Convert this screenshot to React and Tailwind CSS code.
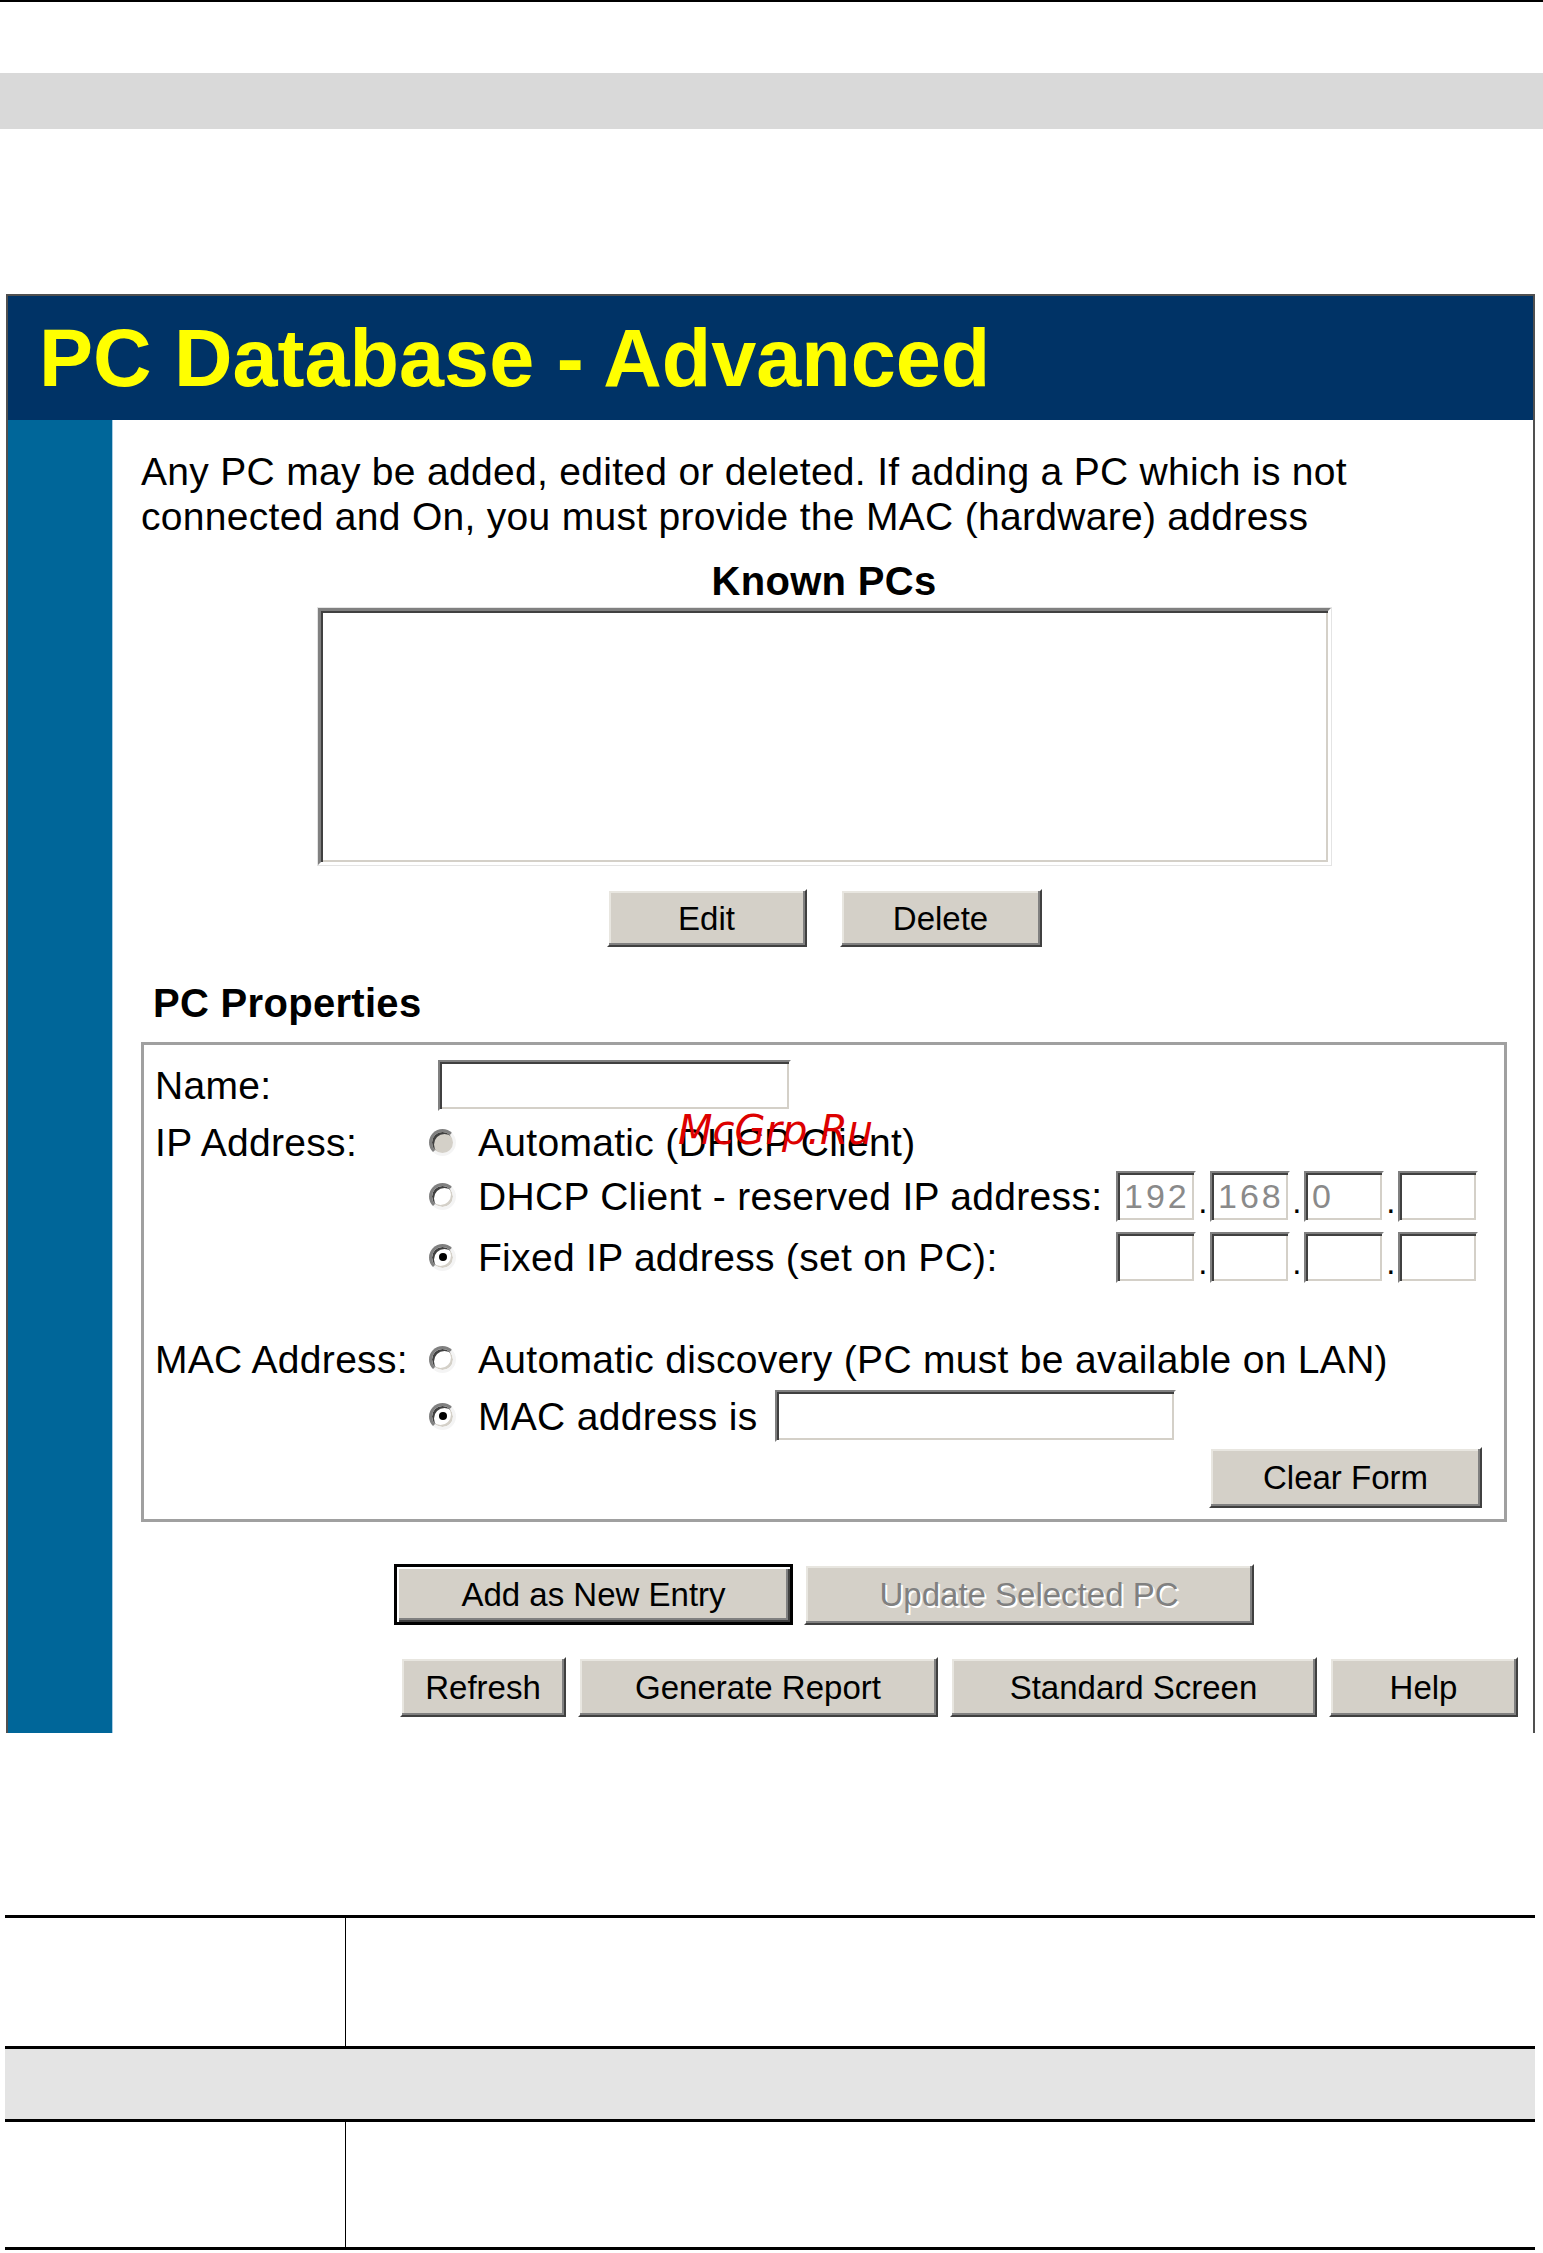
import React from 'react'

// Classic Windows 3D bevels
const RAISED =
  'bg-[#d4d0c8] border-2 border-t-white border-l-white border-b-[#404040] border-r-[#404040] shadow-[inset_-2px_-2px_0_#808080,inset_2px_2px_0_#e8e6e0]'
const SUNKEN =
  'bg-white border-2 border-t-[#808080] border-l-[#808080] border-b-white border-r-white shadow-[inset_2px_2px_0_#404040,inset_-2px_-2px_0_#d4d0c8]'

function Button({ children, className = '', disabled = false }) {
  return (
    <div
      className={`${RAISED} flex items-center justify-center text-[33px] leading-none tracking-normal ${
        disabled ? 'text-[#808080] [text-shadow:2px_2px_0_#ffffff]' : 'text-black'
      } ${className}`}
    >
      {children}
    </div>
  )
}

function Radio({ checked = false, disabled = false }) {
  return (
    <span
      className={`w-[27px] h-[27px] shrink-0 rounded-full border-[3px] border-t-[#808080] border-l-[#808080] border-b-[#f4f4f4] border-r-[#f4f4f4] shadow-[inset_2px_2px_0_#404040,inset_-2px_-2px_0_#d4d0c8] flex items-center justify-center ${
        disabled ? 'bg-[#d4d0c8]' : 'bg-white'
      }`}
    >
      {checked && <span className="w-[8px] h-[8px] rounded-full bg-black" />}
    </span>
  )
}

function IpBox({ value }) {
  return (
    <div className={`${SUNKEN} w-[80px] h-[51px] flex items-center pl-[6px] text-[34px] tracking-[3px] text-[#8a8a8a] leading-none`}>
      {value}
    </div>
  )
}

function Dot() {
  return <div className="w-[14px] h-[51px] flex items-end justify-center text-[33px] leading-[40px]">.</div>
}

function IpFields({ values }) {
  return (
    <div className="flex">
      <IpBox value={values[0]} />
      <Dot />
      <IpBox value={values[1]} />
      <Dot />
      <IpBox value={values[2]} />
      <Dot />
      <IpBox value={values[3]} />
    </div>
  )
}

export default function App() {
  return (
    <div className="relative w-[1543px] h-[2253px] bg-white overflow-hidden font-['Liberation_Sans',Arial,sans-serif] text-black">
      {/* page header rule + grey band */}
      <div className="h-[2px] bg-black" />
      <div className="mt-[71px] h-[56px] bg-[#d9d9d9]" />

      {/* screenshot panel */}
      <div className="mt-[165px] ml-[6px] w-[1529px] border-2 border-b-0 border-[#505050]">
        <div className="h-[124px] bg-[#003366] flex items-center pl-[31px]">
          <h1 className="text-[81px] leading-[80px] font-bold text-[#ffff00]">PC Database - Advanced</h1>
        </div>

        <div className="flex">
          <div className="w-[105px] shrink-0 bg-[#006699] border-r border-[#a9cde4]" />

          <div className="flex-1 pt-[29px] pl-[28px] pr-[26px] pb-[16px]">
            <p className="text-[39px] leading-[45px] tracking-[0.3px]">
              Any PC may be added, edited or deleted. If adding a PC which is not
              <br />
              connected and On, you must provide the MAC (hardware) address
            </p>

            <h2 className="mt-[19px] text-center text-[40px] leading-[46px] font-bold tracking-[0.3px]">Known PCs</h2>
            <div className="mt-[4px] flex justify-center">
              <div className="w-[1013px] h-[257px] bg-white border-[3px] border-t-[#808080] border-l-[#808080] border-b-white border-r-white shadow-[inset_2px_2px_0_#404040,inset_-2px_-2px_0_#d4d0c8] outline outline-1 outline-[#e4e4e4]" />
            </div>

            <div className="mt-[24px] flex justify-center gap-[33px]">
              <Button className="w-[200px] h-[58px]">Edit</Button>
              <Button className="w-[202px] h-[58px]">Delete</Button>
            </div>

            <h2 className="mt-[33px] pl-[12px] text-[40px] leading-[46px] font-bold tracking-[0.3px]">PC Properties</h2>

            {/* fieldset */}
            <div className="mt-[16px] border-[3px] border-[#a0a0a0] shadow-[inset_1px_1px_0_#ffffff] pt-[11px] pl-[11px] pb-[11px] text-[39px] leading-[45px] tracking-[0.3px]">
              {/* Name */}
              <div className="h-[58px] flex items-center">
                <div className="w-[274px] shrink-0">Name:</div>
                <div className={`${SUNKEN} ml-[9px] w-[353px] h-[51px]`} />
              </div>

              {/* IP Address */}
              <div className="h-[56px] flex items-center">
                <div className="w-[274px] shrink-0">IP Address:</div>
                <Radio disabled />
                <span className="ml-[22px] whitespace-nowrap">Automatic (DHCP Client)</span>
              </div>
              <div className="h-[52px] flex items-center pl-[274px]">
                <div className="w-[687px] shrink-0 flex items-center">
                  <Radio />
                  <span className="ml-[22px] whitespace-nowrap">DHCP Client - reserved IP address:</span>
                </div>
                <IpFields values={['192', '168', '0', '']} />
              </div>
              <div className="mt-[9px] h-[52px] flex items-center pl-[274px]">
                <div className="w-[687px] shrink-0 flex items-center">
                  <Radio checked />
                  <span className="ml-[22px] whitespace-nowrap">Fixed IP address (set on PC):</span>
                </div>
                <IpFields values={['', '', '', '']} />
              </div>

              {/* MAC Address */}
              <div className="mt-[48px] h-[56px] flex items-center">
                <div className="w-[274px] shrink-0 whitespace-nowrap">MAC Address:</div>
                <Radio />
                <span className="ml-[22px] whitespace-nowrap">Automatic discovery (PC must be available on LAN)</span>
              </div>
              <div className="mt-[3px] h-[52px] flex items-center pl-[274px]">
                <div className="w-[346px] shrink-0 flex items-center">
                  <Radio checked />
                  <span className="ml-[22px] whitespace-nowrap">MAC address is</span>
                </div>
                <div className={`${SUNKEN} w-[401px] h-[52px]`} />
              </div>

              <div className="mt-[5px] flex justify-end pr-[22px]">
                <Button className="w-[273px] h-[61px]">Clear Form</Button>
              </div>
            </div>

            <div className="mt-[42px] flex justify-center gap-[11px]">
              <div className="w-[399px] h-[61px] border-[3px] border-black flex">
                <div className="flex-1 bg-[#d4d0c8] shadow-[inset_2px_2px_0_#ffffff,inset_-2px_-2px_0_#404040,inset_-4px_-4px_0_#808080] flex items-center justify-center text-[33px] leading-none">
                  Add as New Entry
                </div>
              </div>
              <Button disabled className="w-[450px] h-[61px]">
                Update Selected PC
              </Button>
            </div>

            <div className="mt-[32px] -mr-[11px] flex justify-end gap-[12px]">
              <Button className="w-[166px] h-[60px]">Refresh</Button>
              <Button className="w-[360px] h-[60px]">Generate Report</Button>
              <Button className="w-[367px] h-[60px]">Standard Screen</Button>
              <Button className="w-[189px] h-[60px]">Help</Button>
            </div>
          </div>
        </div>
      </div>

      {/* document table below */}
      <div className="mt-[182px] ml-[5px] w-[1530px] border-t-[3px] border-black">
        <div className="h-[128px] grid grid-cols-[341px_1fr]">
          <div className="border-r border-black" />
          <div />
        </div>
        <div className="border-t-[3px] border-black h-[73px] bg-[#e4e4e4]" />
        <div className="border-t-[3px] border-black h-[131px] grid grid-cols-[341px_1fr] border-b-[3px]">
          <div className="border-r border-black" />
          <div />
        </div>
      </div>

      {/* watermark overlay */}
      <div className="absolute left-[678px] top-[1110px] text-[40px] leading-[40px] italic text-[#dd0000] font-['DejaVu_Sans',sans-serif] pointer-events-none">
        McGrp.Ru
      </div>
    </div>
  )
}
